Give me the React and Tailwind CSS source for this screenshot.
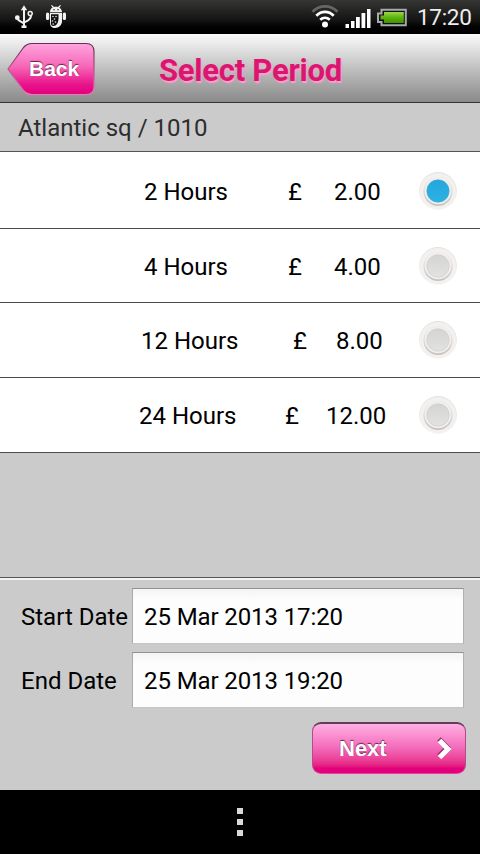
import React from "react";

const PERIODS = [
  { name: "2 Hours", price: "2.00", row: "h-[77px] pt-[1px]", nameBox: "w-[288px] pl-[144px]", poundBox: "w-[46px]", selected: true },
  { name: "4 Hours", price: "4.00", row: "h-[74px]", nameBox: "w-[288px] pl-[144px]", poundBox: "w-[46px]" },
  { name: "12 Hours", price: "8.00", row: "h-[75px]", nameBox: "w-[293px] pl-[141px]", poundBox: "w-[43px]" },
  { name: "24 Hours", price: "12.00", row: "h-[75px]", nameBox: "w-[285px] pl-[139px]", poundBox: "w-[41px]" },
];

function UsbIcon() {
  return (
    <svg width="20" height="24" viewBox="0 0 20 24" fill="none" stroke="#f2f2f2" strokeWidth="2">
      <path d="M10 4V21M10 18.500C7 16 3.500 16.500 3.500 12.500M10 17.500c3-1.500 7-2.500 7-7" />
      <path d="M10 0.300l3.200 5H6.800zM7.500 20.500h5v2.500h-5z" fill="#f2f2f2" stroke="none" />
      <circle cx="3.300" cy="12.700" r="2.400" fill="#f2f2f2" stroke="none" />
      <circle cx="16.200" cy="8.600" r="2" strokeWidth="1.500" />
    </svg>
  );
}

function DebugIcon() {
  return (
    <svg width="22" height="24" viewBox="0 0 22 24" fill="#f2f2f2">
      <path d="M5 7C5 4.600 6.500 3 7.700 2.500L6 .8l.9-.7L9 2c1.300-.4 2.700-.4 4 0L15.100.1l.9.7L14.300 2.500c1.200.7 2.600 2.200 2.700 4.500z" />
      <path d="M5 7.800h12v8.200c0 4-3 7-7 7-3 0-5-2-5-5z" />
      <rect x="1" y="7.500" width="3.200" height="7.500" rx="1.500" />
      <rect x="17.800" y="7.500" width="3.200" height="7.500" rx="1.500" />
      <path d="M6 9.300h7.500v4.200c0 4-2 7.500-5 7.500-2.500 0-3-2-2.500-4z" fill="#111" />
      <g fill="#eee">
        <circle cx="8" cy="11.500" r=".8" /><circle cx="11" cy="11.500" r=".8" /><circle cx="9.500" cy="14" r=".8" />
        <circle cx="7.500" cy="16" r=".8" /><circle cx="10.500" cy="17" r=".8" /><circle cx="8.200" cy="19" r=".8" />
      </g>
      <circle cx="9" cy="4.700" r=".7" fill="#111" /><circle cx="13" cy="4.700" r=".7" fill="#111" />
    </svg>
  );
}

function StatusBar() {
  return (
    <div className="flex h-[34px] bg-linear-to-b from-[#363634] via-[#141414] via-60% to-black pl-[14px] pr-[8px] pt-[5px]">
      <UsbIcon />
      <div className="ml-[11px]"><DebugIcon /></div>
      <svg className="ml-auto" width="28" height="24" viewBox="0 0 28 24" fill="none" stroke="#fff" strokeWidth="2.700">
        <path d="M1.500 6.700C8.500-.5 19.500-.5 26.500 6.700" stroke="#666" />
        <path d="M5.300 10.700c5-5.100 12.400-5.100 17.400 0M9.200 14.800c2.900-2.700 6.700-2.700 9.600 0" />
        <circle cx="14" cy="19.600" r="3" fill="#fff" stroke="none" />
      </svg>
      <svg className="ml-[6px]" width="26" height="24" viewBox="0 0 26 24" fill="#fff">
        <path d="M.5 19h3.500v4H.5zM6 16h3.500v7H6zM11 12h3.800v11H11zM16.500 8h3.800v15h-3.800zM22 4h3.500v19H22z" />
      </svg>
      <svg className="ml-[5px]" width="32" height="24" viewBox="0 0 32 24">
        <defs>
          <linearGradient id="charge" x1="0" y1="0" x2="0" y2="1">
            <stop offset="0" stopColor="#9bd84a" /><stop offset=".5" stopColor="#5cb30c" /><stop offset="1" stopColor="#3f9400" />
          </linearGradient>
        </defs>
        <path d="M5.500 4.800h24.300v15.400H5.500v-3.200H2V8.500h3.500z" fill="#111" stroke="#aaa" strokeWidth="2" />
        <path d="M8 7h19.800v11H8v-3.500H4.500v-4H8z" fill="url(#charge)" />
      </svg>
      <div className="ml-[9px] w-[55px] whitespace-nowrap text-[22.500px] leading-[25px] tracking-[-0.300px] text-[#eee]">17:20</div>
    </div>
  );
}

function Header() {
  return (
    <div className="flex h-[69px] items-start border-b-[1.500px] border-[#303535] bg-linear-to-b from-[#fbfbfb] to-[#8a8a8a] pl-[7px]">
      <button className="grid">
        <svg className="col-start-1 row-start-1 mt-[8px]" width="89" height="54" viewBox="0 0 89 54">
          <defs>
            <linearGradient id="backFill" x1="0" y1="0" x2="0" y2="1">
              <stop offset="0" stopColor="#ffa5df" /><stop offset=".45" stopColor="#f667b6" /><stop offset=".8" stopColor="#e8148c" /><stop offset="1" stopColor="#e3007c" />
            </linearGradient>
            <linearGradient id="backEdge" x1="0" y1="0" x2="0" y2="1">
              <stop offset="0" stopColor="#633051" /><stop offset=".4" stopColor="#a54a80" /><stop offset="1" stopColor="#ef79b8" />
            </linearGradient>
          </defs>
          <path d="M1 27L16.500 5.500Q20 1.500 25 1.500H79Q87 1.500 87 9.500V44.500Q87 52.500 79 52.500H25Q20 52.500 16.500 48.500Z" fill="url(#backFill)" stroke="url(#backEdge)" strokeWidth="1.200" />
        </svg>
        <span className="col-start-1 row-start-1 pl-[22px] pt-[21px] text-left font-['Liberation_Sans',sans-serif] text-[21px] font-bold leading-[28px] text-white [text-shadow:0_-1px_1px_#6b1e4c]">Back</span>
      </button>
      <h1 className="ml-[63px] mt-[18px] whitespace-nowrap text-[31px] font-bold leading-[38px] tracking-[-0.250px] text-[#dc1670] [text-shadow:1px_2px_1px_#ff9dcc]">Select Period</h1>
    </div>
  );
}

function Radio({ selected }) {
  return (
    <svg width="40" height="40" viewBox="0 0 40 40">
      <defs>
        <linearGradient id="ring" x1="0" y1="0" x2="0" y2="1">
          <stop offset="0" stopColor="#e3e1df" /><stop offset="1" stopColor="#f8f6f5" />
        </linearGradient>
        <linearGradient id="rim" x1="0" y1="0" x2="0" y2="1">
          <stop offset="0" stopColor="#efecea" /><stop offset="1" stopColor="#c5c1bf" />
        </linearGradient>
        <linearGradient id="off" x1="0" y1="0" x2="0" y2="1">
          <stop offset="0" stopColor="#d4d4d4" /><stop offset="1" stopColor="#e2e2e1" />
        </linearGradient>
        <linearGradient id="on" x1="0" y1="0" x2="0" y2="1">
          <stop offset="0" stopColor="#25a6da" /><stop offset="1" stopColor="#2cb2e5" />
        </linearGradient>
      </defs>
      <circle cx="20" cy="20" r="18.500" fill="#f3f1f0" stroke="url(#ring)" />
      <circle cx="20" cy="20.500" r="14.500" fill="url(#rim)" />
      <circle cx="20" cy="19.800" r="13.500" fill="#f0efee" />
      <circle cx="20" cy="20" r="11.200" fill={selected ? "url(#on)" : "url(#off)"} stroke={selected ? "#3fa9d2" : "#cccac9"} strokeWidth=".6" />
    </svg>
  );
}

function DateRow({ label, value }) {
  return (
    <div className="flex h-[56px] items-center pr-[16px]">
      <div className="w-[132px] shrink-0 whitespace-nowrap pl-[21px] pt-[2px] text-[24px] leading-[28px]">{label}</div>
      <div className="flex h-[56px] flex-1 items-center border border-t-[#929292] border-r-[#b0b0b0] border-b-[#c4c4c4] border-l-[#aaa] bg-linear-to-b from-[#f4f4f4] to-[#fdfdfd] to-20% pl-[11px] pt-[2px] text-[24px] leading-[28px] tracking-[-0.100px]">{value}</div>
    </div>
  );
}

export default function App() {
  return (
    <div className="flex h-[854px] w-[480px] flex-col overflow-hidden bg-[#cbcbcb] font-[Roboto,sans-serif] text-black">
      <StatusBar />
      <Header />
      <div className="h-[49px] border-b border-[#555] pl-[18px] pt-[11px] text-[24px] leading-[28px] text-[#2d2d2d]">Atlantic sq / 1010</div>
      {PERIODS.map((p) => (
        <div key={p.name} className={`${p.row} flex items-center border-b border-[#4c4c4c] bg-white text-[24px] leading-[28px]`}>
          <div className={`${p.nameBox} whitespace-nowrap pt-[2px]`}>{p.name}</div>
          <div className={`${p.poundBox} pt-[2px]`}>£</div>
          <div className="flex-1 pt-[2px]">{p.price}</div>
          <div className="mr-[22px]"><Radio selected={p.selected} /></div>
        </div>
      ))}
      <div className="h-[124px]" />
      <div className="flex h-[213px] flex-col border-t border-[#555] shadow-[inset_0_2px_0_#f3f3f3]">
        <div className="mt-[10px] flex flex-col gap-[8px]">
          <DateRow label="Start Date" value="25 Mar 2013 17:20" />
          <DateRow label="End Date" value="25 Mar 2013 19:20" />
        </div>
        <button className="ml-auto mr-[14px] mt-[14px] flex h-[52px] w-[154px] items-center rounded-[9px] border border-x-[#b54b8c] border-t-2 border-t-[#673b58] border-b-[#e4469f] bg-linear-to-b from-[#ffafe3] via-[#f268b9] via-50% to-[#e3007c] to-90% pl-[26px] pr-[12px]">
          <span className="font-['Liberation_Sans',sans-serif] text-[22px] font-bold leading-[28px] text-white [text-shadow:0_-1px_1px_#6b1e4c]">Next</span>
          <svg className="ml-auto" width="17" height="26" viewBox="0 0 17 26" fill="none" strokeWidth="5">
            <path d="M3 3l8.500 8.500L3 20" stroke="#8c3268" />
            <path d="M3.500 4.500l8.500 8.500L3.500 21.500" stroke="#fff" />
          </svg>
        </button>
      </div>
      <div className="flex flex-1 flex-col items-center gap-[5px] bg-black pt-[18px]">
        <div className="h-[6px] w-[6px] bg-[#d9d9d9]" />
        <div className="h-[6px] w-[6px] bg-[#d9d9d9]" />
        <div className="h-[6px] w-[6px] bg-[#d9d9d9]" />
      </div>
    </div>
  );
}
